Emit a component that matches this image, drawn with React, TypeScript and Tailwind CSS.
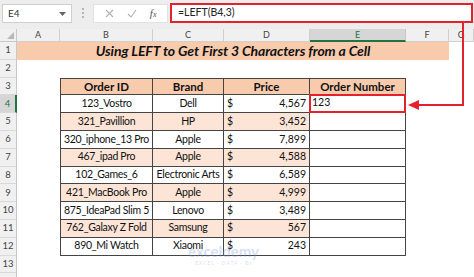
import React from "react";

const data = [
  ["123_Vostro", "Dell", "4,567"],
  ["321_Pavillion", "HP", "3,452"],
  ["320_iphone_13 Pro", "Apple", "7,899"],
  ["467_ipad Pro", "Apple", "4,588"],
  ["102_Games_6", "Electronic Arts", "6,589"],
  ["421_MacBook Pro", "Apple", "4,999"],
  ["875_IdeaPad Slim 5", "Lenovo", "3,489"],
  ["762_Galaxy Z Fold", "Samsung", "567"],
  ["890_Mi Watch", "Xiaomi", "243"],
];

const cols = ["A", "B", "C", "D", "E", "F", "G"];
const RED = "#e3222b";

function RowHead({ n, active = false }: { n?: number; active?: boolean }) {
  return (
    <div
      className={`flex items-center justify-center text-[9.5px] border-b border-[#d9d9d9] ${
        active
          ? "bg-[#d6d6d6] text-[#217346] border-r-2 border-r-[#217346]"
          : "bg-[#f0f0f0] text-[#444] border-r border-r-[#c8c8c8]"
      }`}
    >
      {n}
    </div>
  );
}

function Cell({ className = "", children }: { className?: string; children?: React.ReactNode }) {
  return <div className={`relative flex items-center whitespace-nowrap ${className}`}>{children}</div>;
}

export default function App() {
  return (
    <div
      className="relative w-[474px] h-[277px] overflow-hidden bg-white text-[#111]"
      style={{ fontFamily: "Lato, 'Liberation Sans', sans-serif" }}
    >
      {/* Formula bar */}
      <div className="h-[29px] bg-[#ededed] flex items-start pt-[3px]">
        <div className="ml-[2px] mt-[1px] w-[70px] h-[19px] bg-white border border-[#cfcfcf] flex items-center justify-between px-[5px]">
          <span className="text-[10px] text-[#333]">E4</span>
          <svg width="7" height="4" viewBox="0 0 7 4">
            <path d="M0 0h7L3.5 4z" fill="#666" />
          </svg>
        </div>
        <div className="w-[21px] h-[20px] flex flex-col items-center justify-center gap-[2px]">
          <span className="w-[2px] h-[2px] bg-[#b5b5b5]" />
          <span className="w-[2px] h-[2px] bg-[#b5b5b5]" />
          <span className="w-[2px] h-[2px] bg-[#b5b5b5]" />
        </div>
        <div className="mt-[1px] w-[75px] h-[19px] bg-white border border-[#e2e2e2] flex items-center justify-around px-[4px]">
          <svg width="9" height="9" viewBox="0 0 9 9">
            <path d="M1 1l7 7M8 1L1 8" stroke="#b0b0b0" strokeWidth="1.1" />
          </svg>
          <svg width="10" height="9" viewBox="0 0 10 9">
            <path d="M1 5l3 3 5-7" stroke="#b0b0b0" strokeWidth="1.1" fill="none" />
          </svg>
          <span className="text-[11px] italic text-[#555]" style={{ fontFamily: "'Liberation Serif', serif" }}>
            f<span className="text-[8px]">x</span>
          </span>
        </div>
        <div className="ml-[2px] w-[303px] h-[20px] bg-white border-2 border-[#e3222b] flex items-center pl-[6px]">
          <span className="text-[10.5px] text-[#222]">=LEFT(B4,3)</span>
        </div>
      </div>

      {/* Sheet */}
      <div className="grid grid-cols-[17px_43px_93px_71px_86px_96px_43px_1fr] grid-rows-[13px_repeat(14,17.8px)]">
        {/* column headers */}
        <div className="bg-[#f0f0f0] border-r border-b border-[#c8c8c8] flex items-end justify-end p-[2px]">
          <svg width="7" height="7" viewBox="0 0 7 7">
            <path d="M7 0v7H0z" fill="#b8b8b8" />
          </svg>
        </div>
        {cols.map((c) =>
          c === "E" ? (
            <div
              key={c}
              className="bg-[#d6d6d6] border-r border-[#c8c8c8] border-b-2 border-b-[#217346] flex items-center justify-center text-[9px] text-[#217346]"
            >
              {c}
            </div>
          ) : (
            <div
              key={c}
              className="bg-[#f0f0f0] border-r border-b border-[#cfcfcf] flex items-center justify-center text-[9px] text-[#444]"
            >
              {c}
            </div>
          )
        )}

        {/* row 1 title */}
        <RowHead n={1} />
        <div className="col-span-6 bg-[#f8cbad] flex items-center justify-center text-[14px] font-bold italic tracking-[-0.1px]">
          Using LEFT to Get First 3 Characters from a Cell
        </div>
        <div />

        {/* row 2 */}
        <RowHead n={2} />
        <div className="col-span-7" />

        {/* row 3 headers */}
        <RowHead n={3} />
        <div />
        <Cell className="justify-center bg-[#f8cbad] border border-[#444] font-bold text-[11.5px]">Order ID</Cell>
        <Cell className="justify-center bg-[#f8cbad] border-y border-r border-[#444] font-bold text-[11.5px]">Brand</Cell>
        <Cell className="justify-center bg-[#f8cbad] border-y border-r border-[#444] font-bold text-[11.5px]">Price</Cell>
        <Cell className="justify-center bg-[#f8cbad] border-y border-r border-[#444] font-bold text-[11.5px]">Order Number</Cell>
        <div />
        <div />

        {data.map((r, i) => {
          const bg = i % 2 === 1 ? "bg-[#fce4d6]" : "bg-white";
          return (
            <React.Fragment key={r[0]}>
              <RowHead n={i + 4} active={i === 0} />
              <div />
              <Cell className={`justify-center ${bg} border-x border-b border-[#444] text-[10.5px] tracking-[-0.3px]`}>{r[0]}</Cell>
              <Cell className={`justify-center ${bg} border-r border-b border-[#444] text-[10.5px] tracking-[-0.3px]`}>{r[1]}</Cell>
              <Cell className={`justify-between px-[3px] ${bg} border-r border-b border-[#444] text-[10.5px]`}>
                <span>$</span>
                <span>{r[2]}</span>
              </Cell>
              <Cell className="bg-white border-r border-b border-[#444] text-[10.5px] pl-[2px] items-end">
                {i === 0 && (
                  <>
                    <span className="pb-[1px]">123</span>
                    <div className="absolute -left-[1px] -top-[1px] w-[97px] h-[19px] border-2 border-[#e3222b]" />
                  </>
                )}
              </Cell>
              <div />
              <div />
            </React.Fragment>
          );
        })}

        <RowHead n={13} />
        <div className="col-span-7" />
        <RowHead />
        <div className="col-span-7" />
      </div>

      {/* watermark */}
      <div className="absolute left-[188px] top-[244px] flex flex-col items-center opacity-30 pointer-events-none">
        <span className="text-[15px] font-bold text-[#7b9cd6] leading-none">exceldemy</span>
        <span className="text-[5px] tracking-[1px] text-[#8a9bb8] leading-none mt-[2px]">EXCEL · DATA · BI</span>
      </div>

      {/* arrow */}
      <svg className="absolute left-0 top-0 pointer-events-none" width="474" height="277">
        <path d="M463 22V105H416" stroke={RED} strokeWidth="2" fill="none" />
        <path d="M408 105L419 100V110Z" fill={RED} />
      </svg>
    </div>
  );
}
